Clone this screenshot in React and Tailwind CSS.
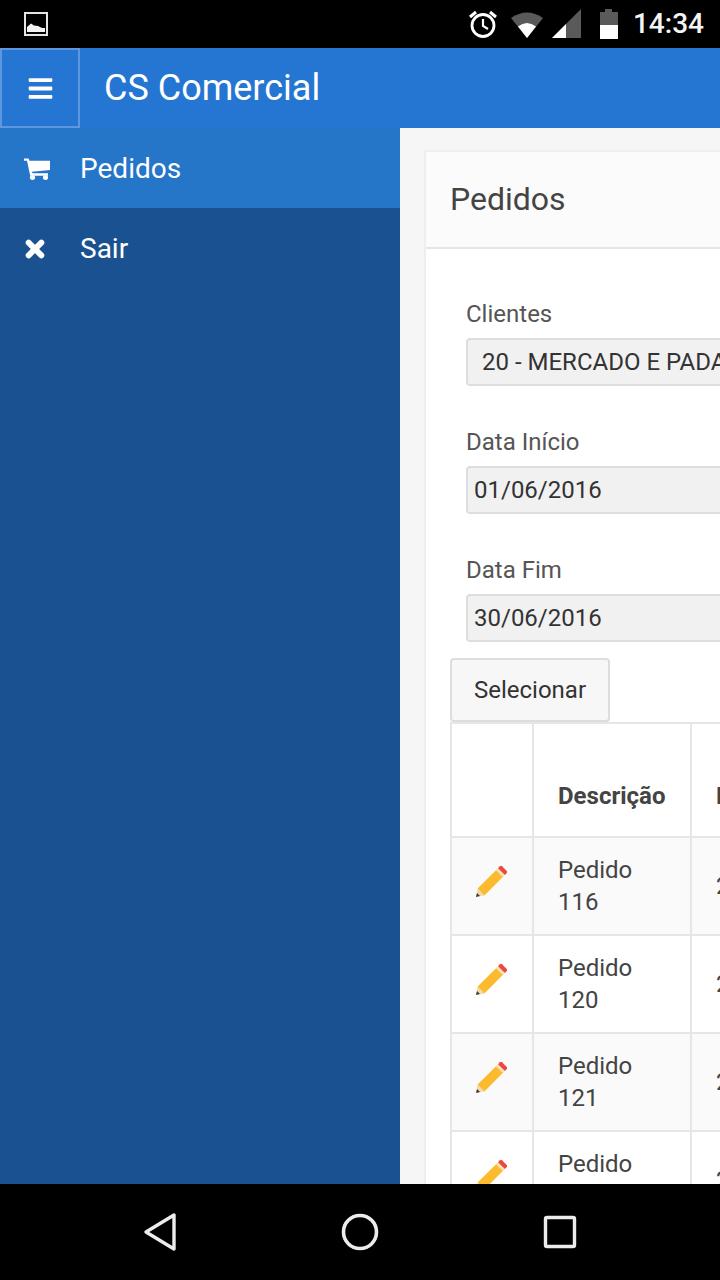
import { FaBars } from 'react-icons/fa'

const rows = [
  { id: 116, bg: 'bg-[#fafafa]' },
  { id: 120, bg: 'bg-white' },
  { id: 121, bg: 'bg-[#fafafa]' },
  { id: 122, bg: 'bg-white' },
]

const fields = [
  { label: 'Clientes', value: '20 - MERCADO E PADARIA', cls: 'pl-[14px]', mb: 'mb-10' },
  { label: 'Data Início', value: '01/06/2016', cls: 'pl-[6px]', mb: 'mb-10' },
  { label: 'Data Fim', value: '30/06/2016', cls: 'pl-[6px]', mb: 'mb-4' },
]

function Pencil() {
  return (
    <svg width="34" height="34" viewBox="0 0 34 34" className="block -mt-[8px] -ml-[2px]">
      <path d="M2 32 L3.6 23.6 L10.4 30.4 Z" fill="#f3d9a8" />
      <path d="M2 32 L3 28 L6 31 Z" fill="#3a3a3a" />
      <path d="M3.6 23.6 L23 4.2 L29.8 11 L10.4 30.4 Z" fill="#fcbb2e" />
      <path d="M22 5.2 L24 3.2 L30.8 10 L28.8 12 Z" fill="#f6e3bd" />
      <path d="M24 3.2 L26 1.2 Q27 0.5 28 1.2 L32.8 6 Q33.5 7 32.8 8 L30.8 10 Z" fill="#ea4a3c" />
    </svg>
  )
}

function CartIcon() {
  return (
    <svg width="26" height="22" viewBox="0 0 26 24" preserveAspectRatio="none" fill="#fff" className="block mt-[2px]">
      <path d="M0 0.5 H4.6 L5.4 3 H26 V13 L8 15 L8.5 16.6 H24 V19.4 H6.2 L3 3 H0 Z" />
      <circle cx="8.5" cy="21.4" r="2.6" />
      <circle cx="21.5" cy="21.4" r="2.6" />
    </svg>
  )
}

function CloseIcon() {
  return (
    <svg width="20" height="20" viewBox="0 0 22 22" className="block ml-[1px] mt-[2px]">
      <path d="M4 4 L18 18 M18 4 L4 18" stroke="#fff" strokeWidth="6.4" strokeLinecap="round" />
    </svg>
  )
}

function StatusBar() {
  return (
    <div className="h-12 shrink-0 bg-black flex items-center justify-between pl-6 pr-4">
      <svg width="24" height="24" viewBox="0 0 24 24">
        <rect x="1" y="1" width="22" height="22" fill="none" stroke="#e4e4e4" strokeWidth="2" />
        <path d="M3 20 V15 L7 11.5 L10 13.5 L14 14 L18 16 L21 16 V20 Z" fill="#f2f2f2" />
      </svg>
      <div className="flex items-center">
        <svg width="30" height="30" viewBox="0 0 30 30" className="mr-[10px]">
          <circle cx="15" cy="16.5" r="11" fill="none" stroke="#fff" strokeWidth="2.8" />
          <path d="M15 10 V17 L20 20" fill="none" stroke="#fff" strokeWidth="2.2" />
          <path d="M2 8 L8 3 M28 8 L22 3" stroke="#fff" strokeWidth="3" />
        </svg>
        <svg width="36" height="30" viewBox="0 0 36 30" className="mr-[7px]">
          <path d="M3 9 Q19 -2 35 9 L19 29 Z" fill="#5a5a5a" />
          <path d="M10 17.5 Q19 10.5 28 17.5 L19 29 Z" fill="#fff" />
        </svg>
        <svg width="32" height="30" viewBox="0 0 32 30" className="mr-[16px]">
          <path d="M1 29 L30 0 V29 Z" fill="#5a5a5a" />
          <path d="M1 29 L15 15 V29 Z" fill="#fff" />
        </svg>
        <svg width="20" height="30" viewBox="0 0 20 30" className="mr-[14px]">
          <path d="M6 0 H13 V3 H19 V30 H1 V3 H6 Z" fill="#5a5a5a" />
          <rect x="1" y="16" width="18" height="14" fill="#fff" />
        </svg>
        <span className="text-[28px] font-medium text-[#f4f4f4] leading-none">14:34</span>
      </div>
    </div>
  )
}

function NavBar() {
  return (
    <div className="h-24 shrink-0 bg-black flex items-center justify-center gap-[160px]">
      <svg width="40" height="40" viewBox="0 0 40 40">
        <path d="M34 3 V37 L6 20 Z" fill="none" stroke="#ececec" strokeWidth="3.4" strokeLinejoin="round" />
      </svg>
      <svg width="40" height="40" viewBox="0 0 40 40">
        <circle cx="20" cy="20" r="16.5" fill="none" stroke="#ececec" strokeWidth="3.6" />
      </svg>
      <svg width="40" height="40" viewBox="0 0 40 40">
        <rect x="5.5" y="5.5" width="29" height="29" rx="1.5" fill="none" stroke="#ececec" strokeWidth="3.4" />
      </svg>
    </div>
  )
}

export default function App() {
  return (
    <div className="w-[720px] h-[1280px] flex flex-col overflow-hidden bg-black font-['Roboto',sans-serif] text-[24px] leading-8 text-[#444]">
      <StatusBar />

      {/* Top bar */}
      <div className="h-20 shrink-0 bg-[#2576d2] flex items-center text-white">
        <div className="w-20 h-20 border-2 border-[#5b98de] flex items-center justify-center">
          <FaBars size={27} />
        </div>
        <span className="ml-6 text-[36px] leading-none">CS Comercial</span>
      </div>

      <div className="flex-1 min-h-0 flex">
        {/* Sidebar */}
        <div className="w-[400px] shrink-0 bg-[#1a5291] text-white text-[28px]">
          <div className="h-20 bg-[#2575c9] flex items-center">
            <div className="w-20 pl-6"><CartIcon /></div>
            <span className="mt-[2px]">Pedidos</span>
          </div>
          <div className="h-20 flex items-center">
            <div className="w-20 pl-6"><CloseIcon /></div>
            <span className="mt-[2px]">Sair</span>
          </div>
        </div>

        {/* Content */}
        <div className="w-[320px] shrink-0 overflow-hidden bg-[#f6f6f6] pl-6 pt-[22px]">
          <div className="w-[700px] bg-white border-2 border-r-0 border-b-0 border-[#eeeeee]">
            <div className="h-[97px] pb-[2px] bg-[#fbfbfb] border-b-2 border-[#e6e6e6] flex items-center pl-6 text-[32px] text-[#444]">
              Pedidos
            </div>
            <div className="pl-6 pt-[49px]">
              {fields.map((f) => (
                <div key={f.label} className={`pl-4 ${f.mb}`}>
                  <div className="mb-2 text-[#555]">{f.label}</div>
                  <div className={`h-12 ${f.cls} bg-[#f1f1f1] border-2 border-[#dedede] rounded flex items-center text-[#333] whitespace-nowrap`}>
                    {f.value}
                  </div>
                </div>
              ))}

              <button className="block w-40 h-16 bg-[#f7f7f7] border-2 border-[#dddddd] rounded text-[#333]">
                Selecionar
              </button>

              <table className="border-collapse table-fixed w-[660px]">
                <colgroup>
                  <col className="w-[82px]" />
                  <col className="w-[158px]" />
                  <col />
                </colgroup>
                <thead>
                  <tr className="h-[114px]">
                    <th className="border-2 border-[#e6e6e6]"></th>
                    <th className="border-2 border-[#e6e6e6] text-left align-bottom pl-6 pb-6 font-bold">Descrição</th>
                    <th className="border-2 border-[#e6e6e6] text-left align-bottom pl-6 pb-6 font-bold">Data</th>
                  </tr>
                </thead>
                <tbody>
                  {rows.map((r) => (
                    <tr key={r.id} className={`h-[98px] ${r.bg}`}>
                      <td className="border-2 border-[#e6e6e6] pl-6"><Pencil /></td>
                      <td className="border-2 border-[#e6e6e6] pl-6">Pedido<br />{r.id}</td>
                      <td className="border-2 border-[#e6e6e6] pl-6">20/06/2016</td>
                    </tr>
                  ))}
                </tbody>
              </table>
            </div>
          </div>
        </div>
      </div>

      <NavBar />
    </div>
  )
}
